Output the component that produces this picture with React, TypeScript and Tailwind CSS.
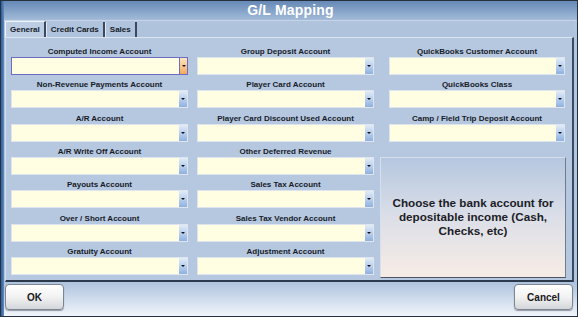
const font = { fontFamily: '"Liberation Sans", Arial, sans-serif' };

const col1 = [
  "Computed Income Account",
  "Non-Revenue Payments Account",
  "A/R Account",
  "A/R Write Off Account",
  "Payouts Account",
  "Over / Short Account",
  "Gratuity Account",
];

const col2 = [
  "Group Deposit Account",
  "Player Card Account",
  "Player Card Discount Used Account",
  "Other Deferred Revenue",
  "Sales Tax Account",
  "Sales Tax Vendor Account",
  "Adjustment Account",
];

const col3 = [
  "QuickBooks Customer Account",
  "QuickBooks Class",
  "Camp / Field Trip Deposit Account",
];

function Combo({ focused }: { focused?: boolean }) {
  return (
    <div
      className={`h-[18px] flex bg-[#fffee2] border ${
        focused ? "border-[#6c6cc2]" : "border-[#dfe5ee]"
      }`}
    >
      <div className="flex-1" />
      <div
        className={`w-[8px] flex items-center justify-center ${
          focused
            ? "bg-gradient-to-b from-[#fde6bd] to-[#f3a95c] border-l border-[#6c6cc2]"
            : "bg-gradient-to-b from-[#e2ecf8] via-[#b9d0ee] to-[#8fb1e0]"
        }`}
      >
        <div className="w-0 h-0 border-l-[2px] border-r-[2px] border-t-[2px] border-l-transparent border-r-transparent border-t-[#111]" />
      </div>
    </div>
  );
}

function Field({ label, focused }: { label: string; focused?: boolean }) {
  return (
    <div className="h-[33.33px] flex flex-col">
      <div className="h-[15.33px] flex items-end justify-center">
        <span className="text-[8px] leading-[10px] font-bold text-[#161b28] whitespace-nowrap">
          {label}
        </span>
      </div>
      <Combo focused={focused} />
    </div>
  );
}

function Tab({ label, active }: { label: string; active?: boolean }) {
  return (
    <div
      className={`h-[15px] px-[4px] flex items-center text-[8px] font-bold text-[#151b28] border-r-2 border-[#3a4860] ${
        active ? "bg-[#bccde4] border-l border-t border-l-[#eef3f9] border-t-[#eef3f9] h-[16px]" : "border-l border-l-[#dfe8f3]"
      }`}
    >
      {label}
    </div>
  );
}

function Button({ label }: { label: string }) {
  return (
    <div className="w-[59px] h-[26px] rounded-[4px] border border-[#7c8593] bg-gradient-to-b from-white via-[#f2f2f2] to-[#d4d6da] shadow-[0_1px_1px_rgba(0,0,0,0.35)] flex items-center justify-center text-[10px] font-bold text-[#1a1a1a]">
      {label}
    </div>
  );
}

export default function App() {
  return (
    <div className="w-[578px] h-[317px] bg-[#27313d] p-px flex" style={font}>
      <div className="w-[3px] bg-gradient-to-r from-[#2f5d96] to-[#5f8cc3]" />
      <div className="flex-1 flex flex-col bg-[#b3c6df]">
        {/* title bar */}
        <div className="h-[20px] bg-gradient-to-b from-[#6689b6] to-[#a3bbd9] flex items-center justify-center border-b border-[#c6d4e7]">
          <span className="text-[14px] font-bold text-white tracking-[0.2px]">G/L Mapping</span>
        </div>

        {/* tab control */}
        <div className="ml-px mr-[3px] flex flex-col">
          <div className="h-[16px] flex items-end bg-[#b0c3dc]">
            <Tab label="General" active />
            <Tab label="Credit Cards" />
            <Tab label="Sales" />
          </div>
          <div className="h-[245px] bg-[#b6c8e0] border-t border-t-[#dbe5f1] border-l border-l-[#d0dcec] border-r-2 border-r-[#3a4a62] border-b-2 border-b-[#2c394c] flex pt-[3.67px] pl-[5px]">
            <div className="w-[177px] flex flex-col">
              {col1.map((l, i) => (
                <Field key={l} label={l} focused={i === 0} />
              ))}
            </div>
            <div className="w-[177px] ml-[9px] flex flex-col">
              {col2.map((l) => (
                <Field key={l} label={l} />
              ))}
            </div>
            <div className="w-[176px] ml-[15px] flex flex-col">
              {col3.map((l) => (
                <Field key={l} label={l} />
              ))}
              <div className="h-[15.33px]" />
              <div className="-ml-[9px] w-[186px] h-[121px] border border-[#d6dfeb] border-r-[#707b8c] border-b-[#4a5566] bg-gradient-to-b from-[#b5c7df] via-[#dcdfe8] to-[#f7ece5] flex items-center justify-center px-2">
                <p className="text-[11.7px] leading-[14px] font-bold text-[#1c1d26] text-center">
                  Choose the bank account for depositable income (Cash, Checks, etc)
                </p>
              </div>
            </div>
          </div>
        </div>

        {/* bottom bar */}
        <div className="flex-1 bg-gradient-to-b from-[#aec3de] to-[#f1f5fa] flex items-start justify-between pl-[1px] pr-[4px] pt-[2px]">
          <Button label="OK" />
          <Button label="Cancel" />
        </div>
      </div>
    </div>
  );
}
